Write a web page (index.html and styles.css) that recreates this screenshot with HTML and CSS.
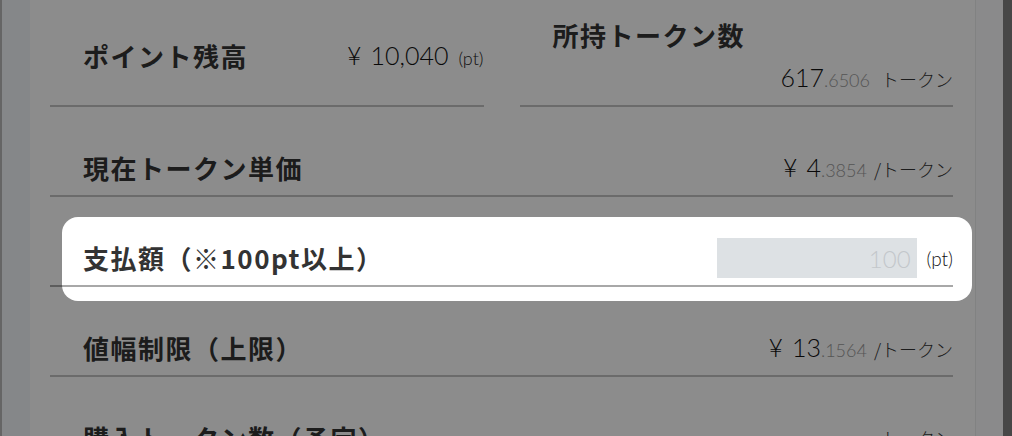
FILE: index.html
```html
<!DOCTYPE html>
<html lang="ja">
<head>
<meta charset="utf-8">
<title>トークン購入</title>
<link rel="stylesheet" href="styles.css">
</head>
<body>
<div class="app">
  <aside class="side"></aside>
  <main class="panel">
    <div class="pair">
      <div class="cell cell--inline">
        <span class="label">ポイント残高</span>
        <span class="value"><span class="num"><span class="yen">¥</span>10,040</span><span class="unit-pt">(pt)</span></span>
      </div>
      <div class="cell cell--stack">
        <span class="label">所持トークン数</span>
        <span class="value"><span class="num">617</span><span class="dec">.6506</span><span class="unit unit--wide">トークン</span></span>
      </div>
    </div>
    <div class="row">
      <span class="label">現在トークン単価</span>
      <span class="value"><span class="num"><span class="yen">¥</span>4</span><span class="dec">.3854</span><span class="unit">/トークン</span></span>
    </div>
    <div class="row row--active">
      <span class="label">支払額（※100pt以上）</span>
      <span class="field"><input class="input" type="text" placeholder="100"><span class="unit-pt unit-pt--dark">(pt)</span></span>
      <div class="spotlight"></div>
    </div>
    <div class="row">
      <span class="label">値幅制限（上限）</span>
      <span class="value"><span class="num"><span class="yen">¥</span>13</span><span class="dec">.1564</span><span class="unit">/トークン</span></span>
    </div>
    <div class="row">
      <span class="label">購入トークン数（予定）</span>
      <span class="value"><span class="unit">トークン</span></span>
    </div>
  </main>
  <div class="gutter"></div>
  <div class="scrollbar"></div>
</div>
</body>
</html>
```
FILE: styles.css
```css
html, body {
  margin: 0;
  height: 100%;
}
body {
  font-family: "Noto Sans CJK JP", sans-serif;
  color: #333;
  overflow: hidden;
}
.app {
  display: flex;
  height: 436px;
  overflow: hidden;
  background: #fff;
}
.side {
  width: 28px;
  flex: none;
  background: #f3f6f9;
  border-left: 2px solid #b8b8b8;
}
.panel {
  flex: 1;
  min-width: 0;
  padding: 17px 22px 0 20px;
  background: #fff;
}
.gutter {
  width: 27px;
  flex: none;
  background: #fbfcfd;
  border-left: 1px solid #eceded;
}
.scrollbar {
  width: 9px;
  flex: none;
  background: #818181;
}

.pair {
  display: grid;
  grid-template-columns: 1fr 1fr;
  column-gap: 36px;
}
.cell {
  box-sizing: border-box;
  height: 90px;
  padding: 0 0 10px 33px;
  border-bottom: 2px solid #c3c3c3;
}
.cell--inline {
  display: flex;
  align-items: center;
  justify-content: space-between;
}
.cell--stack {
  display: flex;
  flex-direction: column;
}
.cell--stack .value {
  align-self: flex-end;
  margin-top: 6px;
}

.label {
  font-size: 26px;
  font-weight: 700;
  letter-spacing: 1.5px;
  line-height: 36px;
  white-space: nowrap;
  color: #333;
}
.value {
  display: flex;
  align-items: baseline;
  font-family: Lato, "Noto Sans CJK JP", sans-serif;
  font-weight: 300;
  line-height: 36px;
  white-space: nowrap;
}
.num {
  font-size: 25px;
  color: #111;
}
.yen {
  margin-right: 9px;
}
.dec {
  font-size: 18px;
  color: #9c9c9c;
}
.unit {
  font-family: "Noto Sans CJK JP", sans-serif;
  font-weight: 300;
  font-size: 18px;
  color: #333;
  margin-left: 7px;
}
.unit--wide {
  margin-left: 11px;
}
.unit-pt {
  font-family: Lato, sans-serif;
  font-weight: 300;
  font-size: 18px;
  color: #222;
  margin-left: 10px;
}
.unit-pt--dark {
  font-size: 19px;
  margin-left: 10px;
  color: #111;
}

.row {
  position: relative;
  box-sizing: border-box;
  height: 90px;
  display: flex;
  justify-content: space-between;
  align-items: center;
  padding: 38px 0 4px 33px;
  border-bottom: 2px solid #c3c3c3;
}
.row--active {
  border-bottom-color: #a8a8a8;
}
.field {
  display: flex;
  align-items: center;
}
.input {
  box-sizing: border-box;
  width: 200px;
  height: 40px;
  margin: 0;
  padding: 0 6px;
  border: 0;
  outline: none;
  background: #dde1e4;
  font-family: Lato, sans-serif;
  font-weight: 300;
  font-size: 24px;
  text-align: right;
  color: #333;
}
.input::placeholder {
  color: #c3c7cb;
}
.spotlight {
  position: absolute;
  top: 20px;
  left: 12px;
  right: -19px;
  bottom: -16px;
  border-radius: 16px;
  box-shadow: 0 0 0 2000px rgba(0, 0, 0, 0.45);
  pointer-events: none;
  z-index: 10;
}
```
